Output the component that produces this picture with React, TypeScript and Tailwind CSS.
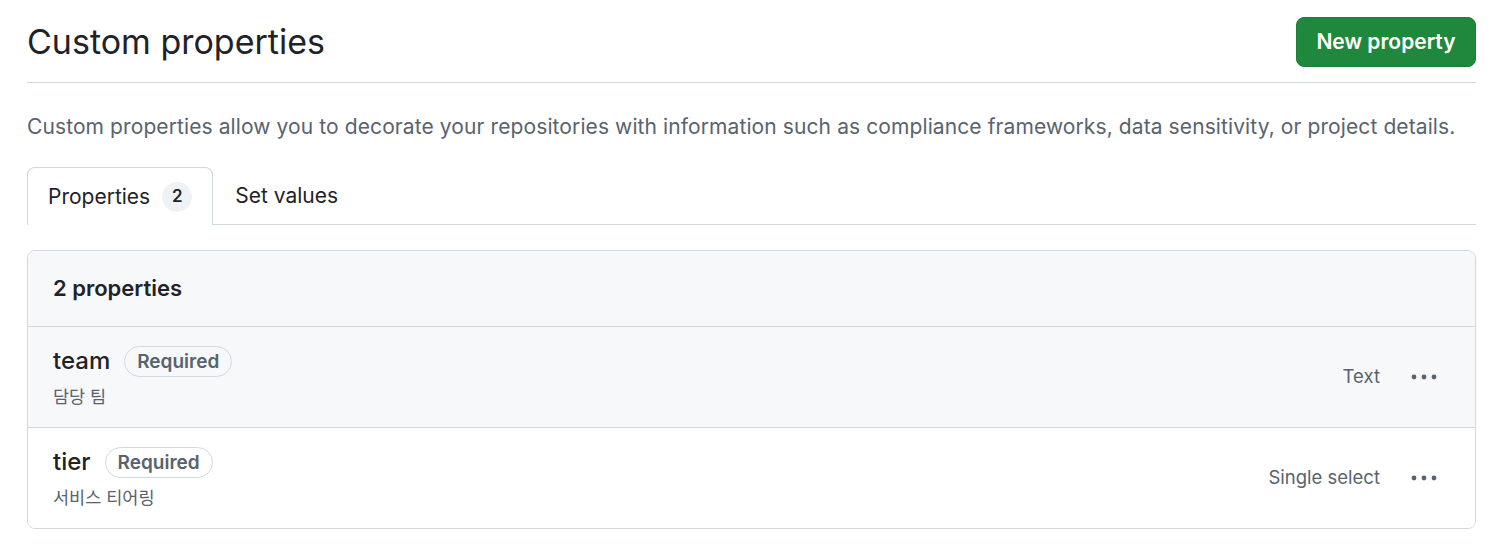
const properties = [
  { name: 'team', description: '담당 팀', type: 'Text', highlighted: true },
  { name: 'tier', description: '서비스 티어링', type: 'Single select', highlighted: false },
];

function KebabButton() {
  return (
    <button className="flex h-8 w-10 items-center justify-center text-[#59636e]">
      <svg width="28" height="8" viewBox="0 0 28 8" fill="currentColor">
        <circle cx="4" cy="4" r="2.4" />
        <circle cx="14" cy="4" r="2.4" />
        <circle cx="24" cy="4" r="2.4" />
      </svg>
    </button>
  );
}

export default function App() {
  return (
    <div
      className="min-h-screen bg-white pl-[27px] pr-[24px] pt-[17px] text-[#1f2328]"
      style={{ fontFamily: 'Inter, "Noto Sans CJK KR", sans-serif' }}
    >
      {/* Page heading */}
      <div className="flex items-center justify-between border-b border-[#d1d9e0] pb-[15px]">
        <h1 className="text-[34px] font-normal leading-[50px]">Custom properties</h1>
        <button className="h-[50px] w-[180px] rounded-[8px] border border-[#1a7f37] bg-[#1f883d] text-[21px] font-semibold text-white">
          New property
        </button>
      </div>

      <p className="mt-[29px] text-[21px] leading-[30px] tracking-[0.1px] text-[#59636e]">
        Custom properties allow you to decorate your repositories with information such as compliance frameworks, data sensitivity, or project details.
      </p>

      {/* Tabs */}
      <div className="mt-[25px] flex border-b border-[#d1d9e0]">
        <div className="-mb-px flex h-[58px] items-center gap-3 rounded-t-[8px] border border-b-0 border-[#d1d9e0] bg-white px-5">
          <span className="text-[21px]">Properties</span>
          <span className="flex h-[30px] min-w-[30px] items-center justify-center rounded-full bg-[#eff2f5] text-[17px] font-semibold">
            2
          </span>
        </div>
        <div className="flex h-[57px] items-center pl-[22px] pr-5 text-[21px]">Set values</div>
      </div>

      {/* Property list */}
      <div className="mt-[25px] overflow-hidden rounded-[8px] border border-[#d1d9e0]">
        <div className="flex h-[75px] items-center bg-[#f6f8fa] px-[25px] text-[22px] font-semibold">
          2 properties
        </div>
        {properties.map((p) => (
          <div
            key={p.name}
            className={`flex h-[101px] items-center justify-between border-t border-[#d1d9e0] pl-[25px] pr-[31px] ${p.highlighted ? 'bg-[#f6f8fa]' : 'bg-white'}`}
          >
            <div className="flex flex-col">
              <div className="flex items-center gap-[14px]">
                <span className="text-[24px] font-medium leading-[30px]">{p.name}</span>
                <span className="rounded-full border border-[#d1d9e0] px-3 text-[19px] font-semibold leading-[29px] text-[#59636e]">
                  Required
                </span>
              </div>
              <span className="mt-[8px] text-[17.5px] leading-[24px] text-[#59636e]">{p.description}</span>
            </div>
            <div className="flex items-center gap-6">
              <span className="text-[18.5px] text-[#59636e]">{p.type}</span>
              <KebabButton />
            </div>
          </div>
        ))}
      </div>
    </div>
  );
}
